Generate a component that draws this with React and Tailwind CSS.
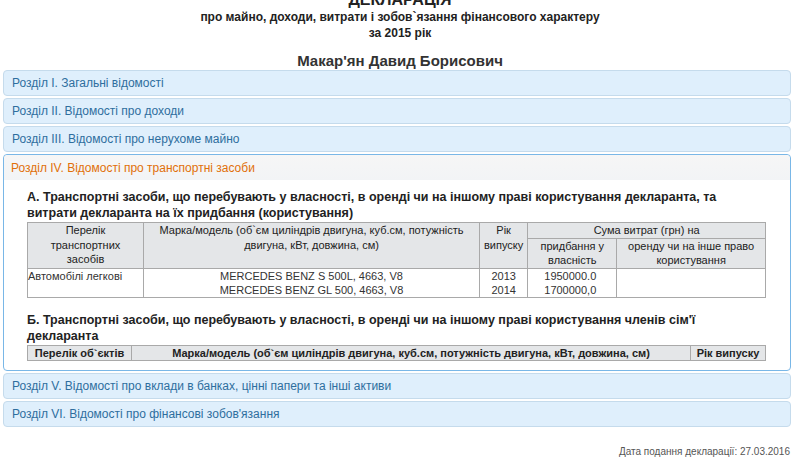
import React from 'react';

const sections = [
  'Розділ I. Загальні відомості',
  'Розділ II. Відомості про доходи',
  'Розділ III. Відомості про нерухоме майно',
];

const after = [
  'Розділ V. Відомості про вклади в банках, цінні папери та інші активи',
  'Розділ VI. Відомості про фінансові зобов\'язання',
];

const cars = [
  { model: 'MERCEDES BENZ S 500L, 4663, V8', year: '2013', sum: '1950000.0' },
  { model: 'MERCEDES BENZ GL 500, 4663, V8', year: '2014', sum: '1700000,0' },
];

const PanelHeader = ({ title }) => (
  <div className="mt-[2px] h-[26px] rounded-[4px] border border-[#c5dbec] bg-[#dfeffc] px-[8px] flex items-center text-[12px] text-[#2e6e9e]">
    {title}
  </div>
);

const cell = 'border border-[#a9a9a9] bg-[#e4e6e8] text-[#222] text-center align-top leading-[14.5px]';
const th = `${cell} font-normal px-[4px]`;
const thB = `${cell} font-bold px-[2px]`;
const td = 'border border-[#a9a9a9] align-top leading-[14px] text-[#333]';

export default function App() {
  return (
    <div className="w-[800px] h-[458px] overflow-hidden bg-white font-['Liberation_Sans',Arial,sans-serif]">
      <div className="text-center text-[#222] font-bold">
        <div className="text-[16px] leading-[18px] mt-[-9px]">ДЕКЛАРАЦІЯ</div>
        <div className="text-[12px] leading-[16px]">про майно, доходи, витрати і зобов`язання фінансового характеру</div>
        <div className="text-[12px] leading-[16px]">за 2015 рік</div>
        <div className="text-[15px] leading-[20px] mt-[10px] text-[#333]">Макар'ян Давид Борисович</div>
      </div>

      <div className="mx-[3px] w-[788px] mt-[-3px]">
        {sections.map((s) => (
          <PanelHeader key={s} title={s} />
        ))}

        <div className="mt-[2px] rounded-[4px] border border-[#79b7e7] bg-white">
          <div className="h-[25px] rounded-t-[4px] bg-gradient-to-b from-[#f6f6f6] to-[#f2f4f6] px-[7px] flex items-center text-[12px] text-[#e17009]">
            Розділ IV. Відомості про транспортні засоби
          </div>
          <div className="px-[23px] pt-[9px] pb-[9px]">
            <div className="text-[12.5px] font-bold leading-[16px] text-[#222]">
              А. Транспортні засоби, що перебувають у власності, в оренді чи на іншому праві користування декларанта, та витрати декларанта на їх придбання (користування)
            </div>
            <table className="w-[739px] border-collapse text-[11px] mt-[1px]">
              <thead>
                <tr>
                  <th rowSpan={2} className={`${th} w-[116px] px-[7px]`}>Перелік транспортних засобів</th>
                  <th rowSpan={2} className={`${th} w-[336px]`}>Марка/модель (об`єм циліндрів двигуна, куб.см, потужність двигуна, кВт, довжина, см)</th>
                  <th rowSpan={2} className={`${th} w-[45px] px-[1px]`}>Рік випуску</th>
                  <th colSpan={2} className={th}>Сума витрат (грн) на</th>
                </tr>
                <tr>
                  <th className={`${th} w-[89px]`}>придбання у власність</th>
                  <th className={th}>оренду чи на інше право користування</th>
                </tr>
              </thead>
              <tbody>
                <tr className="h-[29px]">
                  <td className={`${td} px-0`}>Автомобілі легкові</td>
                  <td className={`${td} text-center`}>
                    {cars.map((c) => <div key={c.model}>{c.model}</div>)}
                  </td>
                  <td className={`${td} text-center`}>
                    {cars.map((c) => <div key={c.year}>{c.year}</div>)}
                  </td>
                  <td className={`${td} text-center pr-[4px]`}>
                    {cars.map((c) => <div key={c.sum}>{c.sum}</div>)}
                  </td>
                  <td className={td}></td>
                </tr>
              </tbody>
            </table>

            <div className="text-[12.5px] font-bold leading-[16px] text-[#222] mt-[14px]">
              Б. Транспортні засоби, що перебувають у власності, в оренді чи на іншому праві користування членів сім'ї декларанта
            </div>
            <table className="w-[739px] border-collapse text-[11px] mt-[1px]">
              <thead>
                <tr>
                  <th className={`${thB} w-[104px]`}>Перелік об`єктів</th>
                  <th className={thB}>Марка/модель (об`єм циліндрів двигуна, куб.см, потужність двигуна, кВт, довжина, см)</th>
                  <th className={`${thB} w-[75px]`}>Рік випуску</th>
                </tr>
              </thead>
            </table>
          </div>
        </div>

        {after.map((s) => (
          <PanelHeader key={s} title={s} />
        ))}
      </div>

      <div className="text-right pr-[10px] mt-[17px] text-[10px] text-[#555]">
        Дата подання декларації: 27.03.2016
      </div>
    </div>
  );
}
